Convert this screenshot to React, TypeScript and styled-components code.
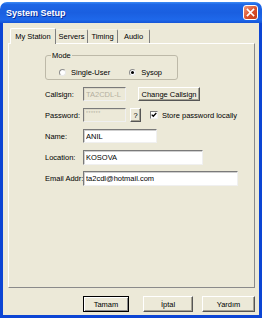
import styled, { createGlobalStyle } from "styled-components";

const GlobalStyle = createGlobalStyle`
  html, body {
    margin: 0;
    padding: 0;
    background: #fff;
  }
  body {
    font-family: "Liberation Sans", Arial, sans-serif;
    font-size: 7.5px;
    color: #000;
  }
  * {
    box-sizing: border-box;
  }
`;

const Window = styled.div`
  width: 262px;
  height: 316px;
  margin-top: 2px;
  display: flex;
  flex-direction: column;
  border-radius: 7px 7px 0 0;
  overflow: hidden;
`;

const TitleBar = styled.div`
  height: 21px;
  flex: none;
  display: flex;
  align-items: center;
  justify-content: space-between;
  padding: 0 4px 0 6px;
  background: linear-gradient(
    #3d8cf5 0%,
    #1d66e6 12%,
    #1a5fe0 50%,
    #1e68ea 85%,
    #1554d6 100%
  );
  color: #fff;
  font-size: 9px;
  font-weight: bold;
  text-shadow: 1px 1px 0 #0a2f9a;
`;

const CloseButton = styled.div`
  width: 15px;
  height: 15px;
  border: 1px solid #fff;
  border-radius: 3px;
  background: linear-gradient(135deg, #f09a7c, #d9502c 55%, #c23d18);
  display: flex;
  align-items: center;
  justify-content: center;
`;

const Frame = styled.div`
  flex: 1;
  display: flex;
  flex-direction: column;
  background: #ece9d8;
  border: 3px solid #0c45d4;
  border-top: none;
  padding: 5px 4px 3px 5px;
`;

const TabRow = styled.div`
  height: 15px;
  flex: none;
  display: flex;
  align-items: flex-end;
  padding-left: 2px;
  position: relative;
  z-index: 1;
`;

const Tab = styled.div<{ $w: number; $active?: boolean }>`
  width: ${(p) => p.$w}px;
  height: ${(p) => (p.$active ? 16 : 14)}px;
  margin-bottom: ${(p) => (p.$active ? -1 : 0)}px;
  display: flex;
  align-items: center;
  justify-content: center;
  background: #ece9d8;
  border-right: 1px solid #7f7f7f;
  border-top: 1px solid ${(p) => (p.$active ? "#fff" : "#f4f2e8")};
  border-left: ${(p) => (p.$active ? "1px solid #fff" : "none")};
  border-radius: 2px 2px 0 0;
  padding-bottom: ${(p) => (p.$active ? 1 : 0)}px;
`;

const Panel = styled.div`
  height: 245px;
  flex: none;
  border: 1px solid;
  border-color: #fff #8a8a8a #8a8a8a #fff;
  padding: 7px 0 0 36px;
`;

const GroupBox = styled.fieldset`
  width: 133px;
  margin: 0;
  padding: 0 0 2px 5px;
  border: 1px solid #bdb9a8;
  border-radius: 3px;
`;

const GroupLegend = styled.legend`
  padding: 0 1px;
  line-height: 9px;
`;

const RadioRow = styled.div`
  height: 9px;
  margin-top: 8px;
  padding-left: 8px;
  display: flex;
  align-items: center;
  gap: 19px;
`;

const RadioOption = styled.label`
  display: flex;
  align-items: center;
  gap: 5px;
`;

const RadioDot = styled.span<{ $checked?: boolean }>`
  width: 7px;
  height: 7px;
  border-radius: 50%;
  border: 1px solid;
  border-color: #8c8c8c #e8e8e8 #e8e8e8 #8c8c8c;
  background: #fff;
  display: flex;
  align-items: center;
  justify-content: center;
  &::after {
    content: "";
    width: 3px;
    height: 3px;
    border-radius: 50%;
    background: ${(p) => (p.$checked ? "#000" : "transparent")};
  }
`;

const Form = styled.div`
  margin-top: 7px;
  display: grid;
  grid-template-columns: 38px auto;
  grid-auto-rows: 14px;
  row-gap: 7px;
  align-items: center;
`;

const Label = styled.span`
  white-space: nowrap;
`;

const Field = styled.div`
  display: flex;
  align-items: center;
  height: 14px;
`;

const TextInput = styled.input<{ $w: number; $h?: number }>`
  width: ${(p) => p.$w}px;
  height: ${(p) => p.$h ?? 14}px;
  margin: 0;
  padding: 0 2px;
  font: inherit;
  font-size: 7.5px;
  color: #000;
  background: #fff;
  border: 1px solid;
  border-color: #7a7a7a #f0f0f0 #f0f0f0 #7a7a7a;
  box-shadow: inset 1px 1px 0 #cfcfcf;
  outline: none;
  &:disabled {
    background: #ece9d8;
    color: #b4b0a0;
    box-shadow: inset 1px 1px 0 #dcd8c8;
  }
`;

const MaskedInput = styled(TextInput)`
  font-size: 5px;
  padding-bottom: 5px;
  letter-spacing: 0.5px;
`;

const Button = styled.button<{ $w: number; $h?: number; $default?: boolean }>`
  width: ${(p) => p.$w}px;
  height: ${(p) => p.$h ?? 14}px;
  margin: 0;
  padding: 0;
  font: inherit;
  font-size: 7.5px;
  color: #000;
  background: #ece9d8;
  border: 1px solid;
  border-color: ${(p) => (p.$default ? "#000" : "#fff #555 #555 #fff")};
  box-shadow: ${(p) =>
    p.$default
      ? "inset 1px 1px 0 #fff, inset -1px -1px 0 #8a8a8a"
      : "inset -1px -1px 0 #a5a293"};
`;

const CheckBox = styled.span`
  width: 8px;
  height: 8px;
  margin-left: 9px;
  border: 1px solid;
  border-color: #7a7a7a #f0f0f0 #f0f0f0 #7a7a7a;
  background: #fff;
  display: flex;
  align-items: center;
  justify-content: center;
`;

const CheckText = styled.span`
  margin-left: 4px;
  white-space: nowrap;
`;

const ButtonRow = styled.div`
  margin-top: 8px;
  display: flex;
  justify-content: flex-end;
`;

const Spacer = styled.span<{ $w: number }>`
  width: ${(p) => p.$w}px;
  flex: none;
`;

export default function App() {
  return (
    <>
      <GlobalStyle />
      <Window>
        <TitleBar>
          <span>System Setup</span>
          <CloseButton>
            <svg width="9" height="9" viewBox="0 0 9 9">
              <path d="M1.5 1.5 L7.5 7.5 M7.5 1.5 L1.5 7.5" stroke="#fff" strokeWidth="1.7" strokeLinecap="square" />
            </svg>
          </CloseButton>
        </TitleBar>
        <Frame>
          <TabRow>
            <Tab $w={46} $active>My Station</Tab>
            <Tab $w={32}>Servers</Tab>
            <Tab $w={30}>Timing</Tab>
            <Tab $w={32}>Audio</Tab>
          </TabRow>
          <Panel>
            <GroupBox>
              <GroupLegend>Mode</GroupLegend>
              <RadioRow>
                <RadioOption>
                  <RadioDot />
                  Single-User
                </RadioOption>
                <RadioOption>
                  <RadioDot $checked />
                  Sysop
                </RadioOption>
              </RadioRow>
            </GroupBox>
            <Form>
              <Label>Callsign:</Label>
              <Field>
                <TextInput $w={43} disabled defaultValue="TA2CDL-L" />
                <Spacer $w={12} />
                <Button $w={62}>Change Callsign</Button>
              </Field>
              <Label>Password:</Label>
              <Field>
                <MaskedInput $w={43} disabled defaultValue="******" />
                <Spacer $w={4} />
                <Button $w={11}>?</Button>
                <CheckBox>
                  <svg width="6" height="6" viewBox="0 0 6 6">
                    <path d="M0.7 2.6 L2.3 4.3 L5.3 1" fill="none" stroke="#000" strokeWidth="1.3" />
                  </svg>
                </CheckBox>
                <CheckText>Store password locally</CheckText>
              </Field>
              <Label>Name:</Label>
              <Field>
                <TextInput $w={74} readOnly defaultValue="ANIL" />
              </Field>
              <Label>Location:</Label>
              <Field>
                <TextInput $w={120} $h={15} readOnly defaultValue="KOSOVA" />
              </Field>
              <Label>Email Addr:</Label>
              <Field>
                <TextInput $w={155} $h={15} readOnly defaultValue="ta2cdl@hotmail.com" />
              </Field>
            </Form>
          </Panel>
          <ButtonRow>
            <Button $w={46} $h={16} $default>Tamam</Button>
            <Spacer $w={14} />
            <Button $w={50} $h={16}>İptal</Button>
            <Spacer $w={9} />
            <Button $w={53} $h={16}>Yardım</Button>
          </ButtonRow>
        </Frame>
      </Window>
    </>
  );
}
